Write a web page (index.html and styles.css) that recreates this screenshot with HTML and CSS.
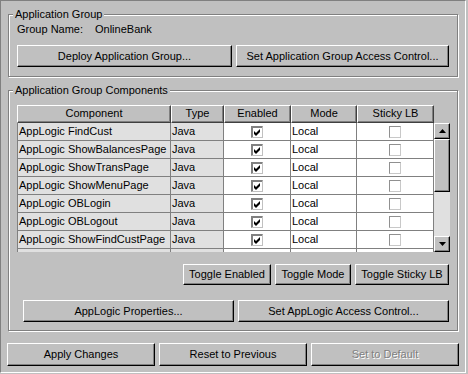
FILE: index.html
```html
<!DOCTYPE html>
<html>
<head>
<meta charset="utf-8">
<title>Application Group</title>
<link rel="stylesheet" href="styles.css">
</head>
<body>
<div class="frame">
  <fieldset class="group group-app">
    <legend>Application Group</legend>
    <div class="name-row"><span class="name-label">Group Name:</span><span>OnlineBank</span></div>
    <div class="app-buttons">
      <button class="btn">Deploy Application Group...</button>
      <button class="btn">Set Application Group Access Control...</button>
    </div>
  </fieldset>

  <fieldset class="group group-comp">
    <legend>Application Group Components</legend>
    <div class="grid">
      <div class="thead">
        <div class="th w-comp">Component</div>
        <div class="th w-type">Type</div>
        <div class="th w-en">Enabled</div>
        <div class="th w-mode">Mode</div>
        <div class="th w-sticky">Sticky LB</div>
      </div>
      <div class="tbody-wrap">
        <div class="viewport">
          <div class="tr"><div class="td w-comp2 shaded">AppLogic FindCust</div><div class="td w-type shaded">Java</div><div class="td w-en center"><span class="cb checked"><svg viewBox="0 0 9 9" width="9" height="9"><polygon points="1,3 3,5 7,1 7,4 3,8 1,6" fill="#000"/></svg></span></div><div class="td w-mode">Local</div><div class="td w-sticky center"><span class="cb"></span></div></div>
          <div class="tr"><div class="td w-comp2 shaded">AppLogic ShowBalancesPage</div><div class="td w-type shaded">Java</div><div class="td w-en center"><span class="cb checked"><svg viewBox="0 0 9 9" width="9" height="9"><polygon points="1,3 3,5 7,1 7,4 3,8 1,6" fill="#000"/></svg></span></div><div class="td w-mode">Local</div><div class="td w-sticky center"><span class="cb"></span></div></div>
          <div class="tr"><div class="td w-comp2 shaded">AppLogic ShowTransPage</div><div class="td w-type shaded">Java</div><div class="td w-en center"><span class="cb checked"><svg viewBox="0 0 9 9" width="9" height="9"><polygon points="1,3 3,5 7,1 7,4 3,8 1,6" fill="#000"/></svg></span></div><div class="td w-mode">Local</div><div class="td w-sticky center"><span class="cb"></span></div></div>
          <div class="tr"><div class="td w-comp2 shaded">AppLogic ShowMenuPage</div><div class="td w-type shaded">Java</div><div class="td w-en center"><span class="cb checked"><svg viewBox="0 0 9 9" width="9" height="9"><polygon points="1,3 3,5 7,1 7,4 3,8 1,6" fill="#000"/></svg></span></div><div class="td w-mode">Local</div><div class="td w-sticky center"><span class="cb"></span></div></div>
          <div class="tr"><div class="td w-comp2 shaded">AppLogic OBLogin</div><div class="td w-type shaded">Java</div><div class="td w-en center"><span class="cb checked"><svg viewBox="0 0 9 9" width="9" height="9"><polygon points="1,3 3,5 7,1 7,4 3,8 1,6" fill="#000"/></svg></span></div><div class="td w-mode">Local</div><div class="td w-sticky center"><span class="cb"></span></div></div>
          <div class="tr"><div class="td w-comp2 shaded">AppLogic OBLogout</div><div class="td w-type shaded">Java</div><div class="td w-en center"><span class="cb checked"><svg viewBox="0 0 9 9" width="9" height="9"><polygon points="1,3 3,5 7,1 7,4 3,8 1,6" fill="#000"/></svg></span></div><div class="td w-mode">Local</div><div class="td w-sticky center"><span class="cb"></span></div></div>
          <div class="tr"><div class="td w-comp2 shaded">AppLogic ShowFindCustPage</div><div class="td w-type shaded">Java</div><div class="td w-en center"><span class="cb checked"><svg viewBox="0 0 9 9" width="9" height="9"><polygon points="1,3 3,5 7,1 7,4 3,8 1,6" fill="#000"/></svg></span></div><div class="td w-mode">Local</div><div class="td w-sticky center"><span class="cb"></span></div></div>
          <div class="tr"><div class="td w-comp2 shaded"></div><div class="td w-type shaded"></div><div class="td w-en center"><span class="cb checked"></span></div><div class="td w-mode"></div><div class="td w-sticky center"><span class="cb"></span></div></div>
        </div>
        <div class="scrollbar">
          <div class="sb-btn"><svg viewBox="0 0 7 4" width="7" height="4"><polygon points="3.5,0 7,4 0,4" fill="#000"/></svg></div>
          <div class="sb-thumb"></div>
          <div class="sb-track"></div>
          <div class="sb-btn"><svg viewBox="0 0 7 4" width="7" height="4"><polygon points="0,0 7,0 3.5,4" fill="#000"/></svg></div>
        </div>
      </div>
    </div>
    <div class="toggle-row">
      <button class="btn t-en">Toggle Enabled</button>
      <button class="btn t-mode">Toggle Mode</button>
      <button class="btn t-sticky">Toggle Sticky LB</button>
    </div>
    <div class="prop-row">
      <button class="btn">AppLogic Properties...</button>
      <button class="btn">Set AppLogic Access Control...</button>
    </div>
  </fieldset>

  <div class="bottom-row">
    <button class="btn">Apply Changes</button>
    <button class="btn">Reset to Previous</button>
    <button class="btn disabled">Set to Default</button>
  </div>
</div>
</body>
</html>
```

FILE: styles.css
```css
* { box-sizing: border-box; }

html, body {
  margin: 0;
  padding: 0;
  background: #c0c0c0;
}

body {
  width: 468px;
  height: 374px;
  overflow: hidden;
  font: 11px/13px "Liberation Sans", Arial, sans-serif;
  color: #000;
}

.frame {
  width: 466px;
  height: 373px;
  border: 1px solid;
  border-color: #808080 #fff #fff #808080;
  display: flex;
  flex-direction: column;
}

.group {
  margin: 0 0 0 7px;
  width: 450px;
  min-width: 0;
  border: 1px solid #808080;
  box-shadow: 1px 1px 0 #fff, inset 1px 1px 0 #fff;
  padding: 0 8px;
}

.group legend {
  padding: 0 2px;
  margin-left: -4px;
  line-height: 13px;
  background: #c0c0c0;
}

.group-app {
  margin-top: 7px;
  padding-top: 2px;
  padding-bottom: 9px;
}

.group-comp {
  margin-top: 7px;
  padding-top: 8px;
  padding-bottom: 8px;
}

.name-row {
  display: flex;
  height: 13px;
}

.name-label {
  width: 78px;
}

.app-buttons {
  margin-top: 9px;
  display: grid;
  grid-template-columns: 215px 213px;
  column-gap: 4px;
}

.app-buttons .btn { height: 22px; }

.btn {
  font: inherit;
  line-height: 13px;
  color: #000;
  background: #c0c0c0;
  margin: 0;
  padding: 0;
  border: 1px solid;
  border-color: #fff #000 #000 #fff;
  box-shadow: inset -1px -1px 0 #808080;
  border-radius: 0;
  text-align: center;
  white-space: nowrap;
  -webkit-appearance: none;
  appearance: none;
}

.btn.disabled {
  color: #808080;
  text-shadow: 1px 1px 0 #fff;
}

/* table */
.grid {
  width: 433px;
  display: flex;
  flex-direction: column;
}

.thead {
  display: flex;
  height: 18px;
}

.th {
  height: 18px;
  line-height: 14px;
  text-align: center;
  border: 1px solid;
  border-color: #fff #404040 #404040 #fff;
  box-shadow: inset -1px -1px 0 #808080;
  white-space: nowrap;
}

.w-comp { width: 154px; }
.w-comp2 { width: 153px; }
.w-type { width: 53px; }
.w-en { width: 67px; }
.w-mode { width: 66px; }
.w-sticky { width: 77px; }

.tbody-wrap {
  display: flex;
  height: 129px;
}

.viewport {
  width: 417px;
  height: 129px;
  overflow: hidden;
  border-left: 1px solid #808080;
  background: #fff;
}

.tr {
  display: flex;
  height: 18px;
}

.td {
  height: 18px;
  line-height: 17px;
  padding-left: 1px;
  border-right: 1px solid #808080;
  border-bottom: 1px solid #808080;
  background: #fff;
  white-space: nowrap;
  overflow: hidden;
}

.td.shaded { background: #e0e0e0; }

.td.center {
  text-align: center;
  padding-left: 0;
}

.cb {
  display: inline-block;
  vertical-align: top;
  width: 12px;
  height: 12px;
  margin-top: 3px;
  border: 1px solid;
  border-color: #909090 #c8c8c8 #c8c8c8 #909090;
  background: #fff;
}

.cb.checked {
  border-color: #808080 #c0c0c0 #c0c0c0 #808080;
  box-shadow: inset 1px 1px 0 #808080;
  padding: 1px 0 0 1px;
}

.cb svg { display: block; }

.scrollbar {
  width: 16px;
  height: 129px;
  display: flex;
  flex-direction: column;
}

.sb-btn, .sb-thumb {
  background: #c0c0c0;
  border: 1px solid;
  border-color: #fff #000 #000 #fff;
  box-shadow: inset -1px -1px 0 #808080;
}

.sb-btn {
  height: 16px;
  display: flex;
  align-items: center;
  justify-content: center;
}

.sb-btn svg { display: block; }

.sb-thumb { height: 53px; }

.sb-track {
  flex: 1;
  background: #e0e0e0;
}

.toggle-row {
  margin-top: 12px;
  display: flex;
  justify-content: flex-end;
  gap: 4px;
  width: 432px;
}

.toggle-row .btn { height: 21px; }
.t-en { width: 88px; }
.t-mode { width: 76px; }
.t-sticky { width: 94px; }

.prop-row {
  margin-top: 15px;
  padding-left: 6px;
  display: grid;
  grid-template-columns: 211px 211px;
  column-gap: 4px;
}

.prop-row .btn { height: 22px; }

.bottom-row {
  margin-top: 12px;
  margin-left: 6px;
  display: grid;
  grid-template-columns: 148px 148px 148px;
  column-gap: 4px;
}

.bottom-row .btn { height: 23px; }
```
